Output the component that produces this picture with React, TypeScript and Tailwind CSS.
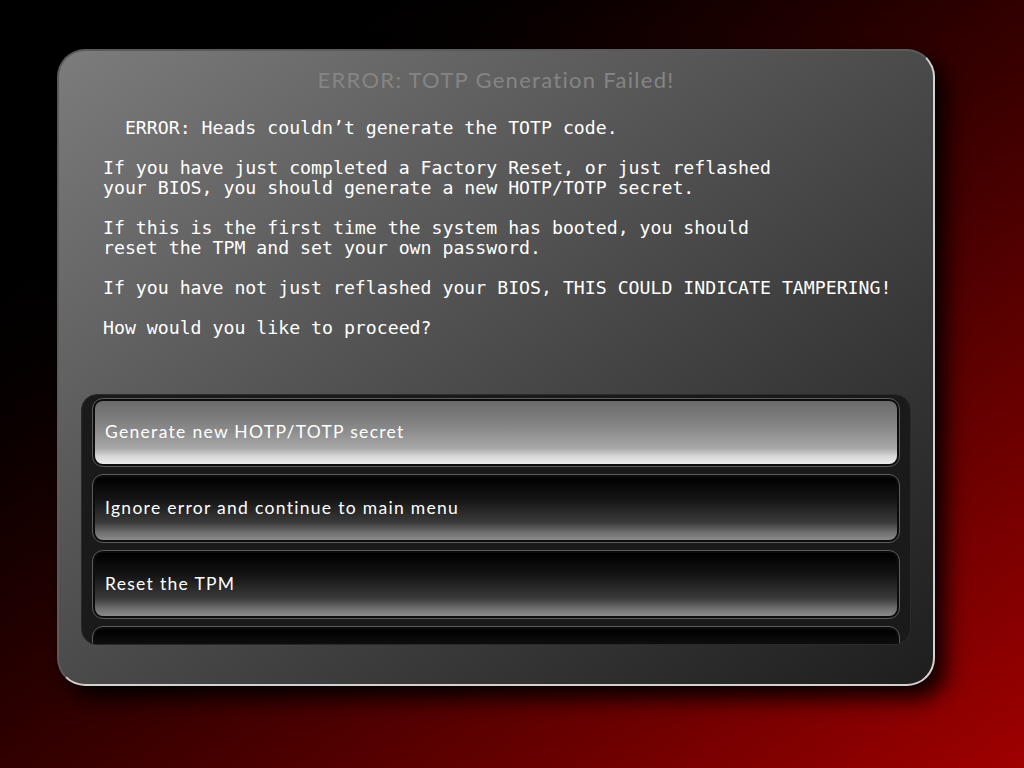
const message = `  ERROR: Heads couldn’t generate the TOTP code.

If you have just completed a Factory Reset, or just reflashed
your BIOS, you should generate a new HOTP/TOTP secret.

If this is the first time the system has booted, you should
reset the TPM and set your own password.

If you have not just reflashed your BIOS, THIS COULD INDICATE TAMPERING!

How would you like to proceed?`;

// last entry sits below the fold of the list, so only its top edge shows
const options = [
  'Generate new HOTP/TOTP secret',
  'Ignore error and continue to main menu',
  'Reset the TPM',
  '',
];

function MenuItem({ label, selected }: { label: string; selected: boolean }) {
  return (
    <div className="shrink-0 h-[69px] rounded-[11px] border border-[#5c5c5c] bg-[#0c0c0c] p-[2px]">
      <div
        className={
          selected
            ? 'h-full rounded-[8px] flex items-center pl-[10px] bg-[linear-gradient(to_bottom,#6a6a6a_0%,#8a8a8a_45%,#a8a8a8_75%,#d8d8d8_88%,#ececec_100%)]'
            : 'h-full rounded-[8px] flex items-center pl-[10px] bg-[linear-gradient(to_bottom,#000000_0%,#141414_35%,#3a3a3a_72%,#6e6e6e_88%,#8c8c8c_100%)]'
        }
      >
        {label && (
          <span className="text-white text-[17.5px] tracking-[1.3px] font-['Lato','Open_Sans',sans-serif]">
            {label}
          </span>
        )}
      </div>
    </div>
  );
}

export default function App() {
  return (
    <div className="w-[1024px] h-[768px] overflow-hidden bg-linear-to-br from-black from-10% to-[#a00000] pt-[49px] pl-[57px]">
      <div className="w-[878px] h-[637px] rounded-[28px] border-2 border-t-[#5a5a5a] border-l-[#5a5a5a] border-r-[#d2d2d2] border-b-[#d2d2d2] bg-linear-to-br from-[#7c7c7c] to-[#1e1e1e] shadow-[10px_12px_22px_rgba(0,0,0,0.95)] flex flex-col">
        <div className="h-[56px] flex items-center justify-center">
          <h1 className="text-[#858585] text-[22px] tracking-[1.3px] font-['Lato','Open_Sans',sans-serif]">
            ERROR: TOTP Generation Failed!
          </h1>
        </div>
        <pre className="mt-[11px] pl-[44px] text-white text-[18.2px] leading-[20px] whitespace-pre font-['DejaVu_Sans_Mono','Liberation_Mono',monospace]">
          {message}
        </pre>
        <div className="mt-[56px] mx-[22px] h-[251px] rounded-[16px] bg-[#1a1a1a] border border-[#2a2a2a] overflow-hidden">
          <div className="pt-[3px] px-[10px] flex flex-col gap-[7px]">
            {options.map((o, i) => (
              <MenuItem key={i} label={o} selected={i === 0} />
            ))}
          </div>
        </div>
      </div>
    </div>
  );
}
